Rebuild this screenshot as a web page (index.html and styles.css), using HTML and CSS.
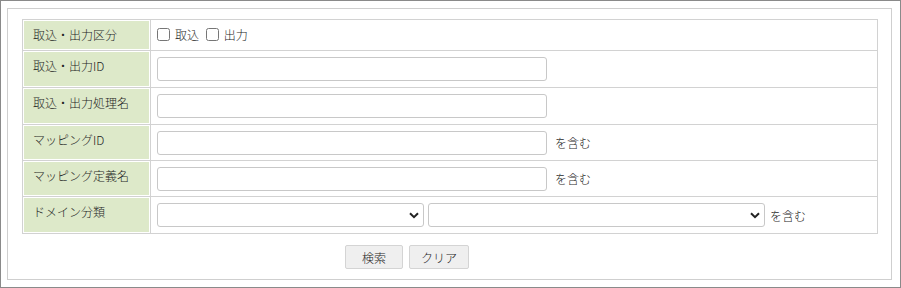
FILE: index.html
```html
<!DOCTYPE html>
<html lang="ja">
<head>
  <meta charset="UTF-8">
  <title>取込・出力検索</title>
  <link rel="stylesheet" href="styles.css">
</head>
<body>
<div class="frame">
  <div class="panel">
    <table class="search">
      <tr class="row--check">
        <th>取込・出力区分</th>
        <td>
          <label class="chk"><input type="checkbox" id="kbnIn"> 取込</label>
          <label class="chk"><input type="checkbox" id="kbnOut"> 出力</label>
        </td>
      </tr>
      <tr>
        <th>取込・出力ID</th>
        <td><input type="text" class="txt" id="ioId"></td>
      </tr>
      <tr>
        <th>取込・出力処理名</th>
        <td><input type="text" class="txt" id="ioName"></td>
      </tr>
      <tr class="row--short">
        <th>マッピングID</th>
        <td><input type="text" class="txt" id="mapId"><span class="note">を含む</span></td>
      </tr>
      <tr class="row--short">
        <th>マッピング定義名</th>
        <td><input type="text" class="txt" id="mapName"><span class="note">を含む</span></td>
      </tr>
      <tr>
        <th>ドメイン分類</th>
        <td>
          <span class="sel sel--s">
            <select id="domain1"><option></option></select>
            <svg class="sel__arrow" width="10" height="7" viewBox="0 0 10 7"><path d="M1 1.2 L5 5.2 L9 1.2" fill="none" stroke="#222" stroke-width="2"/></svg>
          </span><span class="sel sel--l">
            <select id="domain2"><option></option></select>
            <svg class="sel__arrow" width="10" height="7" viewBox="0 0 10 7"><path d="M1 1.2 L5 5.2 L9 1.2" fill="none" stroke="#222" stroke-width="2"/></svg>
          </span><span class="note note--sel">を含む</span>
        </td>
      </tr>
    </table>
    <div class="buttons">
      <button type="button" class="btn">検索</button>
      <button type="button" class="btn">クリア</button>
    </div>
  </div>
</div>
</body>
</html>
```

FILE: styles.css
```css
html, body {
  margin: 0;
  padding: 0;
}
body {
  font-family: "Noto Sans CJK JP", "Liberation Sans", sans-serif;
  font-size: 12px;
  font-weight: 300;
  color: #1e1e1e;
  background-color: #fff;
}
.frame {
  box-sizing: border-box;
  width: 901px;
  height: 288px;
  border: 1px solid #8a8a8a;
  padding: 7px 8px 0 6px;
}
.panel {
  box-sizing: border-box;
  height: 272px;
  border: 1px solid #cfcfcf;
  padding: 10px 14px 0 14px;
}
.search {
  width: 856px;
  border-collapse: collapse;
}
.search th,
.search td {
  border: 1px solid #d2d2d2;
  padding: 0;
  height: 37px;
  box-sizing: border-box;
}
.search th {
  width: 128px;
  background-color: #dde9c9;
  box-shadow: inset 0 0 0 1px #fff;
  font-weight: 300;
  text-align: left;
  vertical-align: top;
  padding: 7px 0 0 10px;
  line-height: 16px;
}
.search td {
  padding: 0 6px;
  vertical-align: middle;
}
.search .row--check th,
.search .row--check td {
  height: 31px;
}
.search .row--short th,
.search .row--short td {
  height: 36px;
}
.chk {
  display: inline-flex;
  align-items: center;
  margin-right: 4px;
}
.chk input {
  width: 13px;
  height: 13px;
  margin: 0 5px 0 0;
}
.txt {
  box-sizing: border-box;
  width: 390px;
  height: 24px;
  border: 1px solid #c8c8c8;
  border-radius: 3px;
  padding: 0 4px;
  font-family: inherit;
  font-size: 12px;
  vertical-align: middle;
  margin: 0;
}
.note {
  margin-left: 8px;
  vertical-align: middle;
}
.note--sel {
  margin-left: 5px;
}
.sel {
  position: relative;
  display: inline-block;
  vertical-align: middle;
}
.sel--s {
  margin-right: 4px;
}
.sel select {
  appearance: none;
  -webkit-appearance: none;
  box-sizing: border-box;
  height: 24px;
  border: 1px solid #c8c8c8;
  border-radius: 3px;
  background-color: #fff;
  font-family: inherit;
  font-size: 12px;
  display: block;
  margin: 0;
}
.sel--s select {
  width: 267px;
}
.sel--l select {
  width: 337px;
}
.sel__arrow {
  position: absolute;
  right: 5px;
  top: 9px;
  pointer-events: none;
}
.buttons {
  display: flex;
  gap: 6px;
  padding: 11px 0 0 323px;
}
.btn {
  box-sizing: border-box;
  height: 24px;
  padding: 0;
  border: 1px solid #d4d4d4;
  border-radius: 2px;
  background-color: #efefef;
  color: #1e1e1e;
  font-family: inherit;
  font-size: 12px;
  font-weight: 300;
  white-space: nowrap;
}
.btn:first-child {
  width: 58px;
}
.btn:last-child {
  width: 60px;
}
```
